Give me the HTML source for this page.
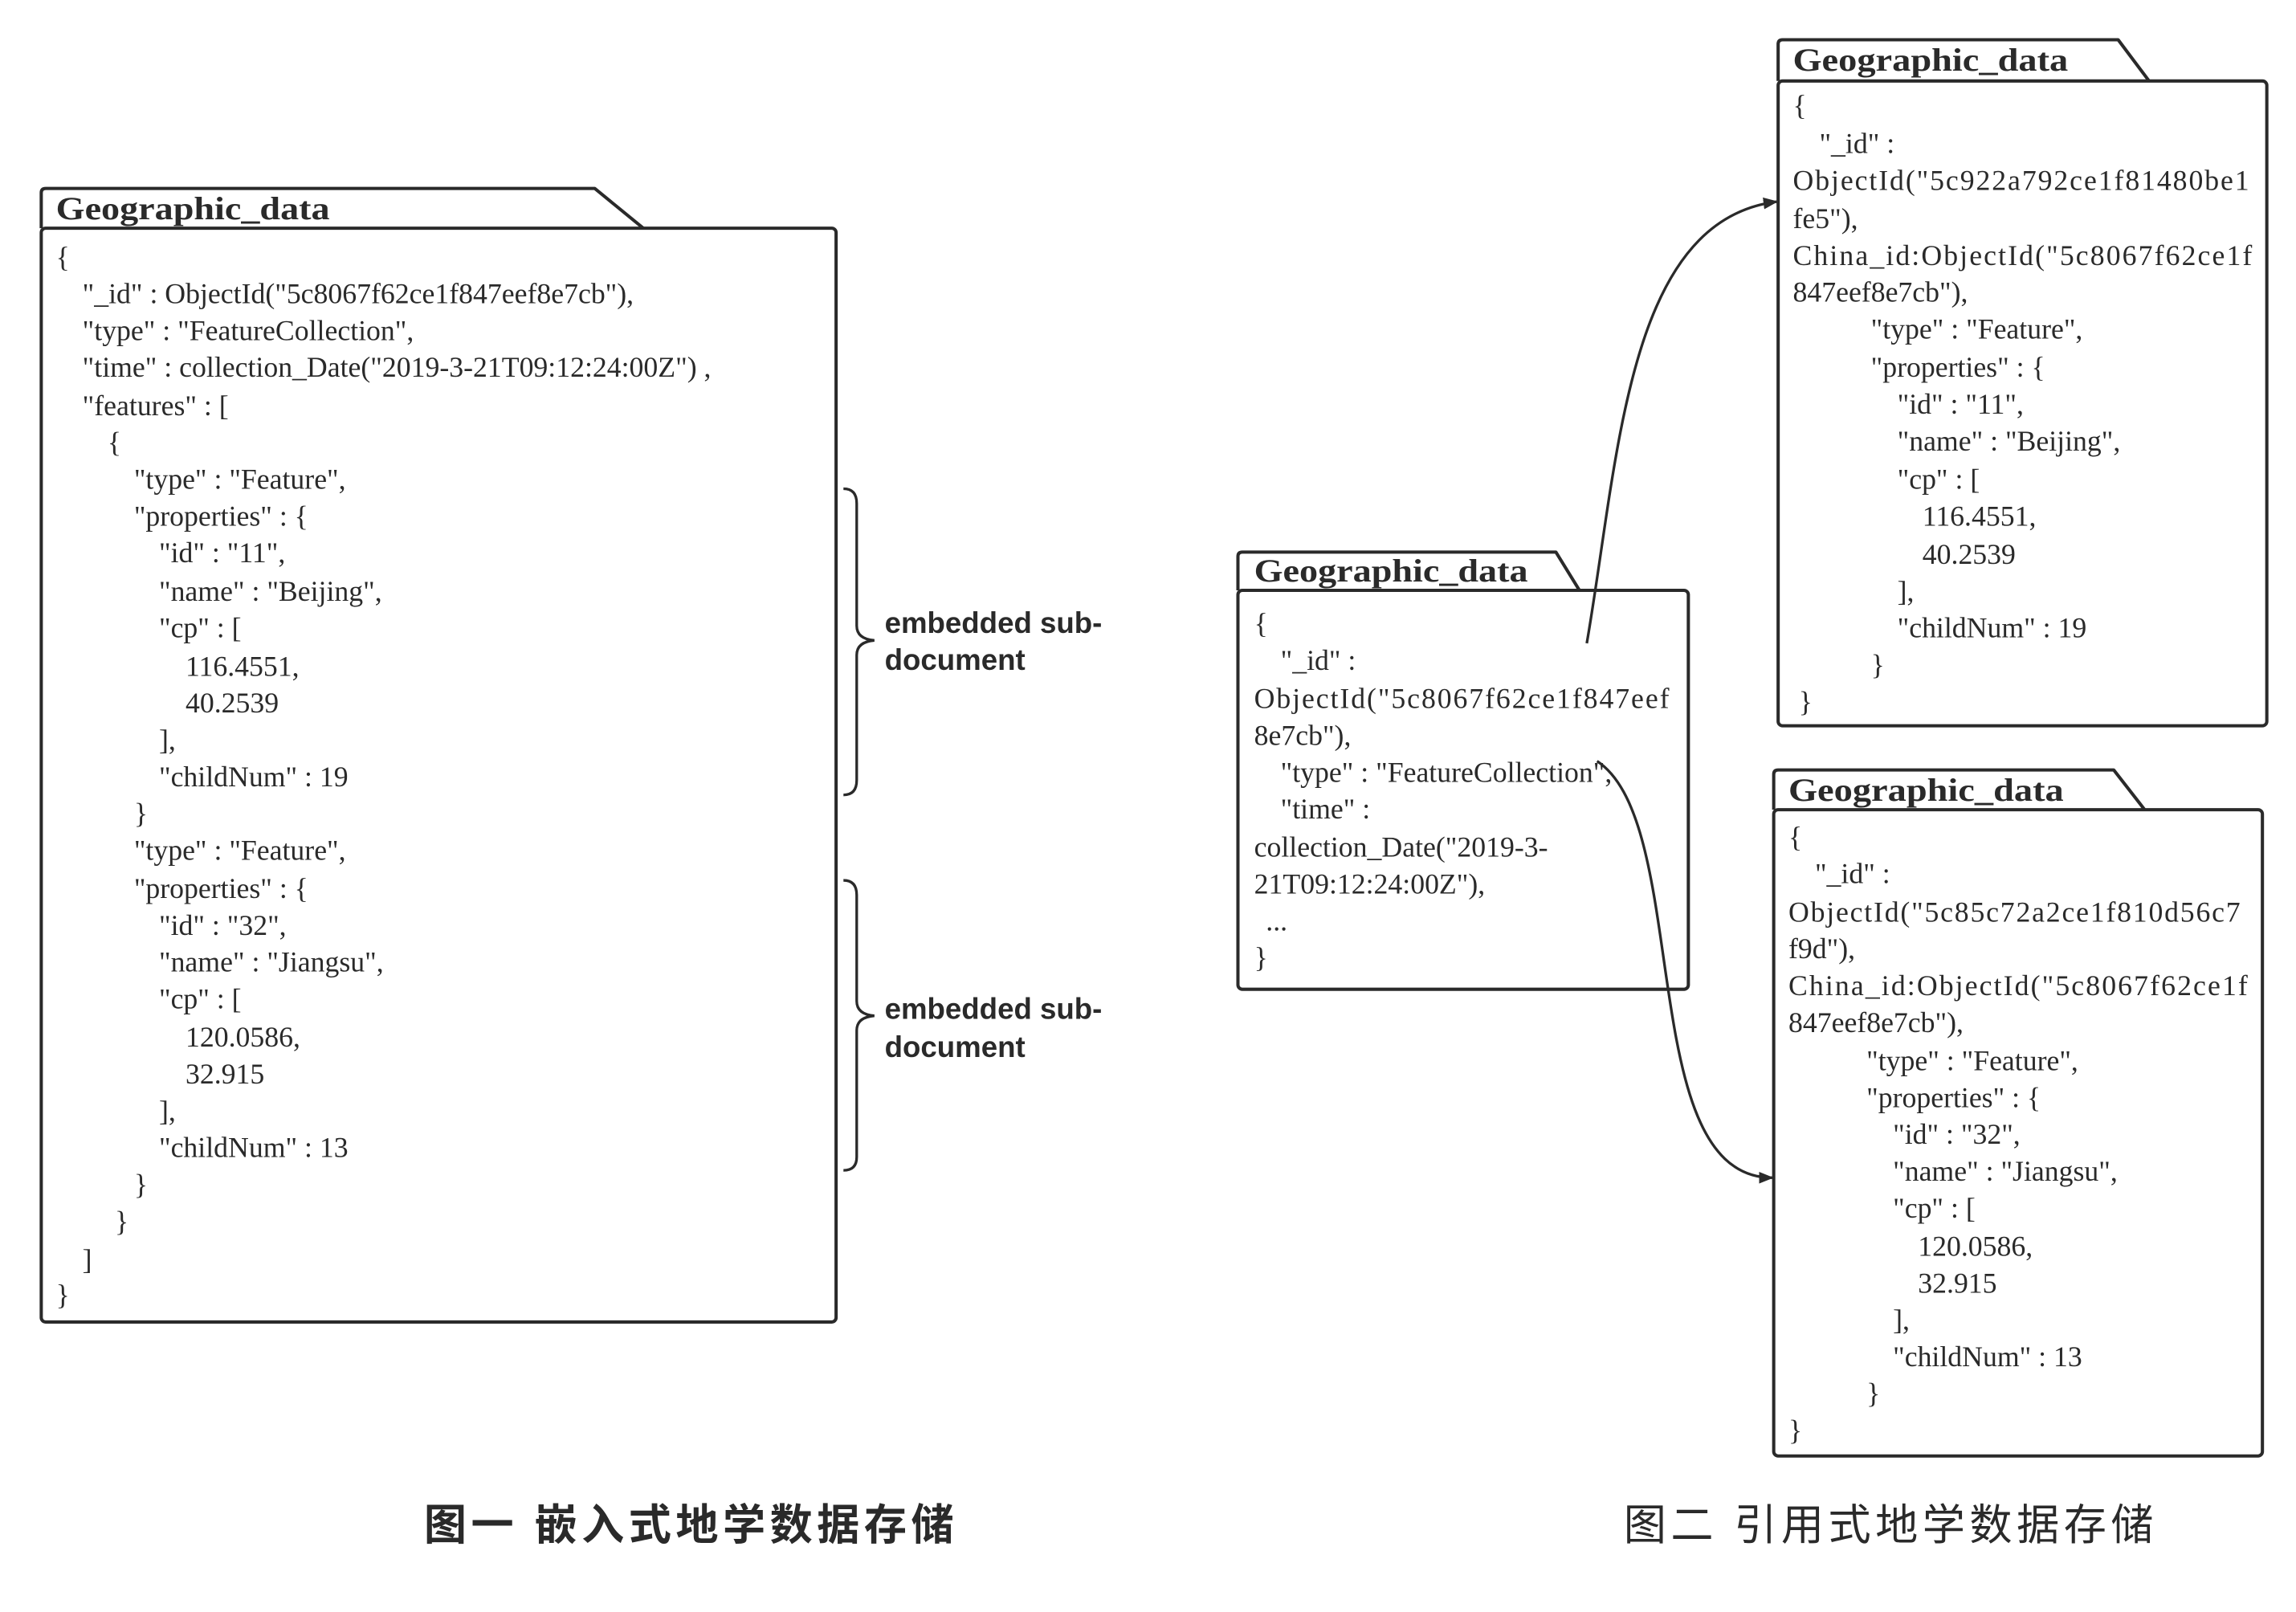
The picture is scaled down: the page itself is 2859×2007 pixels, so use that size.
<!DOCTYPE html>
<html><head><meta charset="utf-8"><style>
html,body{margin:0;padding:0;background:#fff;}
svg{display:block}
.t{font-family:"Liberation Serif",serif;font-size:19.5px;fill:#2a2a2a}
.h{font-family:"Liberation Serif",serif;font-size:22px;font-weight:bold;fill:#2a2a2a}
.e{font-family:"Liberation Sans",sans-serif;font-size:20px;font-weight:bold;fill:#2a2a2a}
.c{font-family:"Liberation Sans","Noto Sans CJK SC",sans-serif;font-size:29px;fill:#2a2a2a;letter-spacing:3px}
.b{fill:#fff;stroke:#2a2a2a;stroke-width:2.2;stroke-linejoin:round}
.l{fill:none;stroke:#2a2a2a;stroke-width:1.8}
</style></head><body>
<svg width="2859" height="2007" viewBox="0 0 1559.8 1095" xmlns="http://www.w3.org/2000/svg">
<defs><marker id="a" markerWidth="10" markerHeight="8" refX="9" refY="4" orient="auto" markerUnits="userSpaceOnUse"><path d="M0,0 L10,4 L0,8 z" fill="#2a2a2a"/></marker></defs>

<path class="b" d="M28,155 V131 Q28,128 31,128 H404 L437,155"/>
<rect class="b" x="28" y="155" width="540" height="743" rx="3"/>
<text class="h" x="38" y="149" textLength="186" lengthAdjust="spacingAndGlyphs">Geographic_data</text>
<g class="t">
<text x="38" y="181">{</text>
<text x="56" y="206">"_id" : ObjectId("5c8067f62ce1f847eef8e7cb"),</text>
<text x="56" y="231">"type" : "FeatureCollection",</text>
<text x="56" y="256">"time" : collection_Date("2019-3-21T09:12:24:00Z") ,</text>
<text x="56" y="282">"features" : [</text>
<text x="73" y="307">{</text>
<text x="91" y="332">"type" : "Feature",</text>
<text x="91" y="357">"properties" : {</text>
<text x="108" y="382">"id" : "11",</text>
<text x="108" y="408">"name" : "Beijing",</text>
<text x="108" y="433">"cp" : [</text>
<text x="126" y="459">116.4551,</text>
<text x="126" y="484">40.2539</text>
<text x="108" y="509">],</text>
<text x="108" y="534">"childNum" : 19</text>
<text x="91" y="559">}</text>
<text x="91" y="584">"type" : "Feature",</text>
<text x="91" y="610">"properties" : {</text>
<text x="108" y="635">"id" : "32",</text>
<text x="108" y="660">"name" : "Jiangsu",</text>
<text x="108" y="685">"cp" : [</text>
<text x="126" y="711">120.0586,</text>
<text x="126" y="736">32.915</text>
<text x="108" y="761">],</text>
<text x="108" y="786">"childNum" : 13</text>
<text x="91" y="811">}</text>
<text x="78" y="836">}</text>
<text x="56" y="862">]</text>
<text x="38" y="886">}</text>
</g>

<path class="l" d="M573,332 Q582,332 582,342 V425 Q582,434 594,435 Q582,436 582,445 V530 Q582,540 573,540"/>
<path class="l" d="M573,598 Q582,598 582,608 V680 Q582,689 594,690 Q582,691 582,700 V786 Q582,795 573,795"/>
<text class="e" x="601" y="430">embedded  sub-</text>
<text class="e" x="601" y="455">document</text>
<text class="e" x="601" y="692">embedded  sub-</text>
<text class="e" x="601" y="718">document</text>

<path class="b" d="M841,401 V378 Q841,375 844,375 H1057 L1073,401"/>
<rect class="b" x="841" y="401" width="306" height="271" rx="3"/>
<text class="h" x="852" y="395" textLength="186" lengthAdjust="spacingAndGlyphs">Geographic_data</text>
<g class="t">
<text x="852" y="430">{</text>
<text x="870" y="455">"_id" :</text>
<text x="852" y="481" textLength="282">ObjectId("5c8067f62ce1f847eef</text>
<text x="852" y="506">8e7cb"),</text>
<text x="870" y="531">"type" : "FeatureCollection",</text>
<text x="870" y="556">"time" :</text>
<text x="852" y="582">collection_Date("2019-3-</text>
<text x="852" y="607">21T09:12:24:00Z"),</text>
<text x="860" y="632">...</text>
<text x="852" y="657">}</text>
</g>

<path class="b" d="M1208,55 V30 Q1208,27 1211,27 H1439 L1460,55"/>
<rect class="b" x="1208" y="55" width="332" height="438" rx="3"/>
<text class="h" x="1218" y="48" textLength="187" lengthAdjust="spacingAndGlyphs">Geographic_data</text>
<g class="t">
<text x="1218" y="78">{</text>
<text x="1236" y="104">"_id" :</text>
<text x="1218" y="129" textLength="310">ObjectId("5c922a792ce1f81480be1</text>
<text x="1218" y="155">fe5"),</text>
<text x="1218" y="180" textLength="312">China_id:ObjectId("5c8067f62ce1f</text>
<text x="1218" y="205">847eef8e7cb"),</text>
<text x="1271" y="230">"type" : "Feature",</text>
<text x="1271" y="256">"properties" : {</text>
<text x="1289" y="281">"id" : "11",</text>
<text x="1289" y="306">"name" : "Beijing",</text>
<text x="1289" y="332">"cp" : [</text>
<text x="1306" y="357">116.4551,</text>
<text x="1306" y="383">40.2539</text>
<text x="1289" y="408">],</text>
<text x="1289" y="433">"childNum" : 19</text>
<text x="1271" y="458">}</text>
<text x="1222" y="483">}</text>
</g>

<path class="b" d="M1205,550 V526 Q1205,523 1208,523 H1436 L1457,550"/>
<rect class="b" x="1205" y="550" width="332" height="439" rx="3"/>
<text class="h" x="1215" y="544" textLength="187" lengthAdjust="spacingAndGlyphs">Geographic_data</text>
<g class="t">
<text x="1215" y="575">{</text>
<text x="1233" y="600">"_id" :</text>
<text x="1215" y="626" textLength="307">ObjectId("5c85c72a2ce1f810d56c7</text>
<text x="1215" y="651">f9d"),</text>
<text x="1215" y="676" textLength="312">China_id:ObjectId("5c8067f62ce1f</text>
<text x="1215" y="701">847eef8e7cb"),</text>
<text x="1268" y="727">"type" : "Feature",</text>
<text x="1268" y="752">"properties" : {</text>
<text x="1286" y="777">"id" : "32",</text>
<text x="1286" y="802">"name" : "Jiangsu",</text>
<text x="1286" y="827">"cp" : [</text>
<text x="1303" y="853">120.0586,</text>
<text x="1303" y="878">32.915</text>
<text x="1286" y="903">],</text>
<text x="1286" y="928">"childNum" : 13</text>
<text x="1268" y="953">}</text>
<text x="1215" y="978">}</text>
</g>

<path class="l" marker-end="url(#a)" d="M1078,437 C1100,310 1105,150 1207,137"/>
<path class="l" marker-end="url(#a)" d="M1085,517 C1150,560 1110,800 1204,800"/>

<text class="c" x="288" y="1046" font-weight="bold">图一  嵌入式地学数据存储</text>
<text class="c" x="1103" y="1046">图二  引用式地学数据存储</text>
</svg>
</body></html>
